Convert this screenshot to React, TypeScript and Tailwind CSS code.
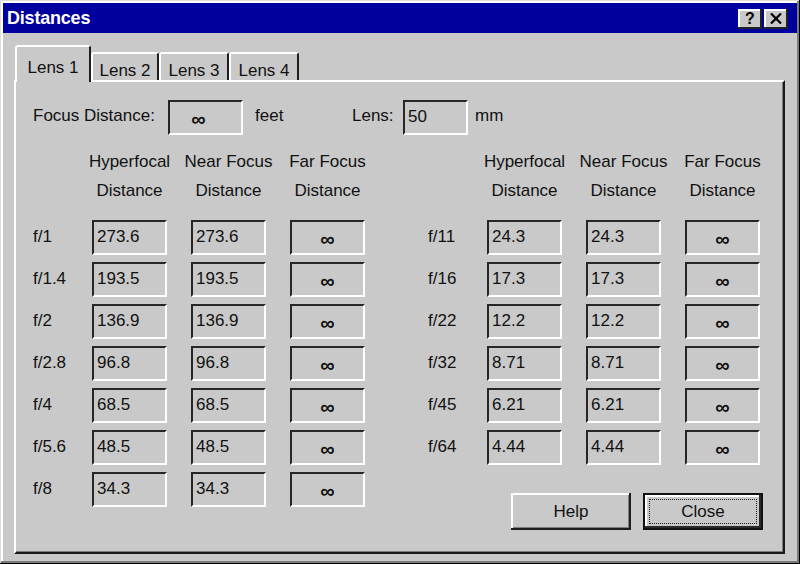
import React from 'react';

const leftRows: [string, string][] = [
  ['f/1', '273.6'],
  ['f/1.4', '193.5'],
  ['f/2', '136.9'],
  ['f/2.8', '96.8'],
  ['f/4', '68.5'],
  ['f/5.6', '48.5'],
  ['f/8', '34.3'],
];

const rightRows: [string, string][] = [
  ['f/11', '24.3'],
  ['f/16', '17.3'],
  ['f/22', '12.2'],
  ['f/32', '8.71'],
  ['f/45', '6.21'],
  ['f/64', '4.44'],
];

const Field: React.FC<{ children?: React.ReactNode; center?: boolean; className?: string }> = ({ children, center, className = '' }) => (
  <div
    className={`h-[35px] flex items-center border-2 border-t-[#262626] border-l-[#262626] border-b-white border-r-white ${
      center ? 'justify-center pt-[2px] text-[20px] font-bold' : 'pl-[3px] pb-[2px]'
    } ${className}`}
  >
    {children}
  </div>
);

const Header: React.FC<{ top: string }> = ({ top }) => (
  <div className="h-[66px] flex flex-col items-center leading-[29px]">
    <div className="whitespace-nowrap">{top}</div>
    <div className="whitespace-nowrap">Distance</div>
  </div>
);

const Group: React.FC<{ rows: [string, string][] }> = ({ rows }) => (
  <div className="grid grid-cols-[35px_75px_75px_75px] gap-x-[24px] gap-y-[7px] content-start">
    <div />
    <Header top="Hyperfocal" />
    <Header top="Near Focus" />
    <Header top="Far Focus" />
    {rows.map(([f, v]) => (
      <React.Fragment key={f}>
        <div className="h-[35px] flex items-center whitespace-nowrap pb-[2px]">{f}</div>
        <Field>{v}</Field>
        <Field>{v}</Field>
        <Field center>∞</Field>
      </React.Fragment>
    ))}
  </div>
);

const Tab: React.FC<{ label: string; active?: boolean; w: string }> = ({ label, active, w }) =>
  active ? (
    <div
      className={`${w} h-[37px] -mb-[2px] relative z-10 bg-[#c9c9c9] border-t-2 border-l-2 border-t-white border-l-white border-r-2 border-r-[#1e1e1e] rounded-t-[3px] flex justify-center pt-[8px]`}
    >
      {label}
    </div>
  ) : (
    <div
      className={`${w} h-[28px] border-t-2 border-l-2 border-t-white border-l-white border-r-2 border-r-[#1e1e1e] rounded-t-[3px] flex justify-center pt-[4px]`}
    >
      {label}
    </div>
  );

export default function App() {
  return (
    <div className="w-[800px] h-[564px] bg-[#c9c9c9] p-[3px] flex flex-col font-['Liberation_Sans',Arial,sans-serif] text-[17px] text-[#111] shadow-[inset_-1px_-1px_0_#000,inset_1px_1px_0_#dedede,inset_-3px_-3px_0_#7a7a7a,inset_3px_3px_0_#fff]">
      {/* title bar */}
      <div className="h-[30px] bg-[#00009e] flex items-center justify-between pl-[4px] pr-[9px] shrink-0">
        <span className="text-white font-bold text-[18px] tracking-[-0.2px]">Distances</span>
        <div className="flex gap-[2px] pt-[1px]">
          <div className="w-[24px] h-[20px] bg-[#c9c9c9] flex items-center justify-center font-bold text-[16px] leading-none text-black shadow-[inset_-2px_-2px_0_#222,inset_2px_2px_0_#fff]">
            ?
          </div>
          <div className="w-[24px] h-[20px] bg-[#c9c9c9] flex items-center justify-center shadow-[inset_-2px_-2px_0_#222,inset_2px_2px_0_#fff]">
            <svg width="12" height="11" viewBox="0 0 12 11">
              <path d="M1 0.5 L11 10.5 M11 0.5 L1 10.5" stroke="#000" strokeWidth="2.2" fill="none" />
            </svg>
          </div>
        </div>
      </div>

      {/* body */}
      <div className="flex-1 flex flex-col pt-[12px] pl-[11px] pr-[12px] pb-[7px]">
        <div className="flex items-end pl-[1px] h-[35px]">
          <Tab label="Lens 1" active w="w-[76px]" />
          <Tab label="Lens 2" w="w-[68px]" />
          <Tab label="Lens 3" w="w-[70px]" />
          <Tab label="Lens 4" w="w-[70px]" />
        </div>

        <div className="flex-1 border-2 border-t-white border-l-white border-r-[#1a1a1a] border-b-[#1a1a1a] shadow-[inset_-1px_-1px_0_#7a7a7a] pt-[18px] pl-[17px]">
          {/* focus / lens row */}
          <div className="flex items-center h-[35px]">
            <span className="w-[135px] whitespace-nowrap pb-[4px]">Focus Distance:</span>
            <Field center className="w-[75px] pr-[14px]">∞</Field>
            <span className="w-[109px] pl-[12px] pb-[4px]">feet</span>
            <span className="w-[51px] pb-[4px]">Lens:</span>
            <Field className="w-[65px]">50</Field>
            <span className="pl-[7px] pb-[4px]">mm</span>
          </div>

          <div className="flex items-start mt-[12px]">
            <Group rows={leftRows} />
            <div className="ml-[63px] flex flex-col">
              <Group rows={rightRows} />
              <div className="flex mt-[28px] ml-[83px] gap-[12px]">
                <div className="w-[120px] h-[37px] flex items-center justify-center shadow-[inset_-2px_-2px_0_#1e1e1e,inset_2px_2px_0_#fff,inset_-3px_-3px_0_#808080]">
                  Help
                </div>
                <div className="w-[120px] h-[37px] border-2 border-[#111] flex">
                  <div className="flex-1 flex p-[4px] shadow-[inset_-2px_-2px_0_#2a2a2a,inset_2px_2px_0_#fff]">
                    <div className="flex-1 flex items-center justify-center border border-dotted border-[#222]">
                      Close
                    </div>
                  </div>
                </div>
              </div>
            </div>
          </div>
        </div>
      </div>
    </div>
  );
}
